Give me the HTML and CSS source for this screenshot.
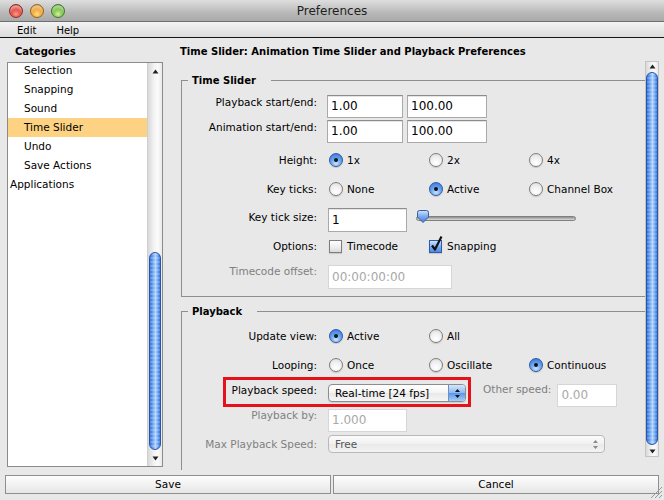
FILE: index.html
```html
<!DOCTYPE html>
<html>
<head>
<meta charset="utf-8">
<title>Preferences</title>
<link rel="stylesheet" href="styles.css">
</head>
<body>
<div class="window">
  <div class="titlebar">
    <div class="lights"><span class="light red"></span><span class="light amber"></span><span class="light green"></span></div>
    <div class="title">Preferences</div>
    <div></div>
  </div>
  <div class="menubar"><span>Edit</span><span>Help</span></div>

  <div class="main">
    <div class="left">
      <div class="cat-title">Categories</div>
      <div class="listbox">
        <div class="list">
          <div class="item first">Selection</div>
          <div class="item">Snapping</div>
          <div class="item">Sound</div>
          <div class="item sel">Time Slider</div>
          <div class="item">Undo</div>
          <div class="item">Save Actions</div>
          <div class="item top">Applications</div>
        </div>
        <div class="vscroll lscroll">
          <div class="arrow up"><svg width="7" height="5" viewBox="0 0 7 5"><path d="M3.5 0.5 L6.5 4.5 L0.5 4.5Z" fill="#222"/></svg></div>
          <div class="track"><div class="thumb"></div></div>
          <div class="arrow down"><svg width="7" height="5" viewBox="0 0 7 5"><path d="M0.5 0.5 L6.5 0.5 L3.5 4.5Z" fill="#222"/></svg></div>
        </div>
      </div>
    </div>

    <div class="right">
      <div class="heading">Time Slider: Animation Time Slider and Playback Preferences</div>
      <div class="content">
        <div class="viewport">
          <fieldset class="group g1">
            <legend>Time Slider</legend>
            <div class="row r1">
              <div class="lbl">Playback start/end:</div>
              <div class="span"><div class="tf w76">1.00</div><div class="tf w80">100.00</div></div>
            </div>
            <div class="row r2">
              <div class="lbl">Animation start/end:</div>
              <div class="span"><div class="tf w76">1.00</div><div class="tf w80">100.00</div></div>
            </div>
            <div class="row r3">
              <div class="lbl">Height:</div>
              <div class="opt"><span class="radio on"></span>1x</div>
              <div class="opt"><span class="radio"></span>2x</div>
              <div class="opt"><span class="radio"></span>4x</div>
            </div>
            <div class="row r4">
              <div class="lbl">Key ticks:</div>
              <div class="opt"><span class="radio"></span>None</div>
              <div class="opt"><span class="radio on"></span>Active</div>
              <div class="opt"><span class="radio"></span>Channel Box</div>
            </div>
            <div class="row r5">
              <div class="lbl">Key tick size:</div>
              <div class="span">
                <div class="tf w79 h24">1</div>
                <div class="slider">
                  <div class="strack"></div>
                  <svg class="sthumb" width="14" height="14" viewBox="0 0 14 14">
                    <defs><linearGradient id="tg" x1="0" y1="0" x2="0" y2="1"><stop offset="0" stop-color="#cfe2fb"/><stop offset="0.5" stop-color="#7aaaf0"/><stop offset="1" stop-color="#3d7fe0"/></linearGradient></defs>
                    <path d="M1.5 2.5 Q1.5 0.5 3.5 0.5 L10.5 0.5 Q12.5 0.5 12.5 2.5 L12.5 7 L7 12.5 L1.5 7 Z" fill="url(#tg)" stroke="#3a5f9e" stroke-width="1"/>
                  </svg>
                </div>
              </div>
            </div>
            <div class="row r6">
              <div class="lbl">Options:</div>
              <div class="opt cb"><span class="check"></span>Timecode</div>
              <div class="opt cb"><span class="check on"><svg width="16" height="17" viewBox="0 0 16 17"><path d="M3 9.5 L6 13.5 L12.5 0.5" fill="none" stroke="#111" stroke-width="2.2" stroke-linejoin="round"/></svg></span>Snapping</div>
            </div>
            <div class="row r7">
              <div class="lbl dis">Timecode offset:</div>
              <div class="span"><div class="tf dis w124 h24">00:00:00:00</div></div>
            </div>
          </fieldset>

          <fieldset class="group g2">
            <legend>Playback</legend>
            <div class="row u1">
              <div class="lbl">Update view:</div>
              <div class="opt"><span class="radio on"></span>Active</div>
              <div class="opt"><span class="radio"></span>All</div>
            </div>
            <div class="row u2">
              <div class="lbl">Looping:</div>
              <div class="opt"><span class="radio"></span>Once</div>
              <div class="opt"><span class="radio"></span>Oscillate</div>
              <div class="opt"><span class="radio on"></span>Continuous</div>
            </div>
            <div class="row u3">
              <div class="lbl">Playback speed:</div>
              <div class="span">
                <div class="combo w138"><span class="ctext">Real-time [24 fps]</span><span class="stepper"><svg width="7" height="11" viewBox="0 0 7 11"><path d="M3.5 1 L6 4 L1 4Z M1 7 L6 7 L3.5 10Z" fill="#111"/></svg></span></div>
                <div class="olbl dis">Other speed:</div>
                <div class="tf dis w60 h23 other">0.00</div>
              </div>
              <div class="redbox"></div>
            </div>
            <div class="row u4">
              <div class="lbl dis">Playback by:</div>
              <div class="span"><div class="tf dis w79 h23">1.000</div></div>
            </div>
            <div class="row u5">
              <div class="lbl dis">Max Playback Speed:</div>
              <div class="span">
                <div class="combo disabled w277"><span class="ctext">Free</span><span class="dstep"><svg width="7" height="11" viewBox="0 0 7 11"><path d="M3.5 1 L6 4 L1 4Z M1 7 L6 7 L3.5 10Z" fill="#8a8a8a"/></svg></span></div>
              </div>
            </div>
          </fieldset>
        </div>
        <div class="vscroll rscroll">
          <div class="arrow up"><svg width="7" height="5" viewBox="0 0 7 5"><path d="M3.5 0.5 L6.5 4.5 L0.5 4.5Z" fill="#222"/></svg></div>
          <div class="track"><div class="thumb"></div></div>
          <div class="arrow down"><svg width="7" height="5" viewBox="0 0 7 5"><path d="M0.5 0.5 L6.5 0.5 L3.5 4.5Z" fill="#222"/></svg></div>
        </div>
      </div>
    </div>
  </div>

  <div class="buttons"><div class="btn save">Save</div><div class="btn cancel">Cancel</div></div>
  <svg class="grip" width="14" height="14" viewBox="0 0 14 14"><path d="M13 2 L2 13 M13 6 L6 13 M13 10 L10 13" stroke="#9a9a9a" stroke-width="1"/></svg>
</div>
</body>
</html>
```

FILE: styles.css
```css
* { box-sizing: border-box; }

body {
  margin: 0;
  background: #e8e8e8;
  font-family: "DejaVu Sans", "Liberation Sans", sans-serif;
  font-size: 10.5px;
  color: #000;
}

.window {
  position: relative;
  width: 664px;
  height: 500px;
  overflow: hidden;
  background: #e8e8e8;
}

/* title bar */
.titlebar {
  height: 22px;
  display: grid;
  grid-template-columns: 1fr auto 1fr;
  align-items: center;
  background: linear-gradient(#dedede, #b9b9b9 60%, #a9a9a9);
  border-bottom: 1px solid #6f6f6f;
}
.lights { display: flex; gap: 7px; padding-left: 9px; }
.light {
  width: 14px;
  height: 14px;
  border-radius: 50%;
  box-shadow: inset 0 3px 3px rgba(255,255,255,0.55);
}
.red { background: radial-gradient(circle at 50% 75%, #ff9d8c 0%, #e2453a 45%, #a9231a 100%); border: 1px solid #8b2a22; }
.amber { background: radial-gradient(circle at 50% 75%, #ffe08a 0%, #f0a12a 45%, #b8660e 100%); border: 1px solid #9a6417; }
.green { background: radial-gradient(circle at 50% 75%, #d5f59c 0%, #74c043 45%, #3d8a1d 100%); border: 1px solid #3f7a24; }
.title { font-size: 12px; color: #1e1e1e; padding-top: 1px; }

.menubar {
  height: 16px;
  display: flex;
  align-items: center;
  gap: 20px;
  padding: 1px 0 0 17px;
  font-size: 10px;
  background: linear-gradient(#f3f3f3, #dcdcdc);
  border-bottom: 1px solid #141414;
}

/* main area */
.main { display: flex; height: 432px; }

.left { width: 156px; margin-left: 7px; display: flex; flex-direction: column; }
.cat-title { height: 24px; padding: 7px 0 0 8px; font-weight: bold; font-size: 10px; line-height: 13px; }
.listbox {
  height: 405px;
  border: 1px solid #8b8b8b;
  background: #fff;
  display: flex;
}
.list { flex: 1; overflow: hidden; }
.item { height: 19px; line-height: 19px; padding-left: 16px; white-space: nowrap; }
.item.first { margin-top: -2px; }
.item.sel { background: #fdd383; }
.item.top { padding-left: 2px; }

/* scrollbars */
.vscroll {
  display: flex;
  flex-direction: column;
  background: linear-gradient(to right, #d9d9d9, #f4f4f4 45%, #fbfbfb 70%, #e9e9e9);
}
.lscroll { width: 15px; border-left: 1px solid #cfcfcf; }
.arrow { display: flex; justify-content: center; }
.lscroll .arrow.up { height: 14px; padding-top: 6px; }
.lscroll .arrow.down { height: 14px; padding-top: 4px; }
.track { flex: 1; display: flex; flex-direction: column; justify-content: flex-end; padding: 0 1px; }
.lscroll .thumb { height: 198px; margin-bottom: 2px; }
.thumb {
  width: 12px;
  margin: 0 auto;
  border-radius: 6px;
  border: 1px solid #2a55a8;
  background:
    repeating-linear-gradient(to bottom, rgba(255,255,255,0.18) 0 2px, rgba(255,255,255,0) 2px 4px),
    linear-gradient(to right, #3270da, #6ea6f2 30%, #b3d3fb 55%, #76adf3 75%, #3572dc);
}

.right { width: 479px; margin-left: 17px; display: flex; flex-direction: column; }
.heading { height: 24px; padding-top: 7px; font-weight: bold; font-size: 10px; line-height: 13px; white-space: nowrap; }
.content { flex: 1; display: flex; align-items: flex-start; }
.viewport { flex: 1; height: 408px; overflow: hidden; padding: 11px 0 0 1px; }

.rscroll { width: 14px; height: 396px; margin-top: -1px; border: 1px solid #c4c4c4; }
.rscroll .arrow.up { height: 10px; padding-top: 2px; }
.rscroll .arrow.down { height: 10px; padding-top: 3px; }
.rscroll .track { justify-content: flex-start; padding: 0; }
.rscroll .thumb { height: 373px; margin-top: 0; }

/* groups */
.group {
  margin: 0;
  padding: 0 0 7px 0;
  min-width: 0;
  border: 1px solid #8e8e8e;
  border-right: none;
}
.group legend {
  margin-left: 6px;
  padding: 1px 15px 0 4px;
  font-weight: bold;
  font-size: 10px;
  line-height: 13px;
}
.g2 { margin-top: 7px; padding-bottom: 60px; }

.row {
  display: grid;
  grid-template-columns: 146px 100px 100px 1fr;
  align-items: center;
  position: relative;
}
.lbl { text-align: right; padding-right: 11px; white-space: nowrap; line-height: 13px; }
.dis { color: #808080; }
.span { grid-column: 2 / -1; display: flex; align-items: flex-start; }

.r1 { margin-top: 8px; height: 23px; align-items: start; }
.r1 .lbl, .r2 .lbl { padding-top: 1px; }
.r1 .span, .r2 .span { gap: 4px; margin-left: -1px; }
.r2 { margin-top: 2px; height: 23px; align-items: start; }
.r3 { margin-top: 8px; height: 18px; }
.r4 { margin-top: 11px; height: 18px; }
.r5 { margin-top: 10px; height: 24px; align-items: start; }
.r5 .lbl { padding-top: 3px; }
.r6 { margin-top: 5px; height: 18px; }
.r7 { margin-top: 10px; height: 24px; align-items: start; }
.r7 .lbl { padding-top: 0; }

.u1 { margin-top: 9px; height: 18px; }
.u2 { margin-top: 11px; height: 18px; }
.u3 { margin-top: 3px; height: 29px; align-items: start; }
.u3 .lbl { padding-top: 7px; }
.u4 { margin-top: 3px; height: 23px; align-items: start; }
.u4 .lbl { padding-top: 0; }
.u5 { margin-top: 3px; height: 18px; align-items: start; }
.u5 .lbl { padding-top: 3px; }

/* text fields */
.tf {
  height: 23px;
  background: #fff;
  border: 1px solid #a9a9a9;
  border-top-color: #8c8c8c;
  font-size: 12px;
  line-height: 21px;
  padding-left: 3px;
  white-space: nowrap;
  box-shadow: inset 0 1px 0 #e4e4e4;
}
.tf.dis { color: #a8a8a8; border-color: #d6d6d6; box-shadow: none; }
.h24 { height: 24px; line-height: 22px; }
.h23 { height: 23px; }
.w76 { width: 76px; }
.w79 { width: 79px; }
.w80 { width: 80px; }
.w60 { width: 60px; }
.w124 { width: 124px; }

/* radios & checks */
.opt { display: flex; align-items: center; gap: 4px; padding-left: 1px; white-space: nowrap; }
.opt.cb { gap: 5px; }
.radio {
  width: 14px;
  height: 14px;
  border-radius: 50%;
  border: 1px solid #7d7d7d;
  background: radial-gradient(circle at 50% 75%, #ffffff 0%, #f1f1f1 50%, #d6d6d6 100%);
  box-shadow: 0 1px 1px rgba(0,0,0,0.15);
  display: flex;
  align-items: center;
  justify-content: center;
  flex: none;
}
.radio.on {
  border-color: #2f5aa8;
  background: radial-gradient(circle at 50% 80%, #c9e3ff 0%, #6ba5ee 45%, #2f6fd3 100%);
}
.radio.on::after {
  content: "";
  width: 4px;
  height: 4px;
  border-radius: 50%;
  background: #111;
}
.check {
  position: relative;
  width: 13px;
  height: 13px;
  flex: none;
  border: 1px solid #7d7d7d;
  background: linear-gradient(#ffffff, #ececec 60%, #dadada);
  box-shadow: 0 1px 1px rgba(0,0,0,0.12);
}
.check.on {
  border-color: #2f5aa8;
  background: linear-gradient(#cfe3fb, #78aaee 55%, #4b8be4);
}
.check.on svg { position: absolute; left: -1px; top: -5px; }

/* slider */
.slider { position: relative; margin-left: 9px; margin-top: 4px; width: 160px; height: 16px; }
.strack {
  margin-top: 4px;
  height: 5px;
  border-radius: 3px;
  background: linear-gradient(#8c8c8c, #bdbdbd 60%, #d8d8d8);
  border: 1px solid #7f7f7f;
}
.sthumb { position: absolute; left: 0; top: -2px; }

/* combos */
.combo {
  display: flex;
  height: 18px;
  margin-top: 7px;
  border: 1px solid #8d8d8d;
  border-radius: 4px;
  overflow: hidden;
  background: linear-gradient(#ffffff, #f4f4f4 50%, #e8e8e8 51%, #f6f6f6);
  box-shadow: 0 1px 1px rgba(0,0,0,0.12);
}
.w138 { width: 138px; }
.w277 { width: 277px; margin-top: 0; }
.ctext { flex: 1; padding-left: 6px; line-height: 16px; white-space: nowrap; }
.stepper {
  width: 17px;
  display: flex;
  align-items: center;
  justify-content: center;
  border-left: 1px solid #6e8fc4;
  background: linear-gradient(#d6e7fb, #8dbaf3 48%, #5a97ea 52%, #a8cdf7);
}
.combo.disabled { border-color: #b9b9b9; color: #555; box-shadow: none; background: linear-gradient(#fbfbfb, #f1f1f1 50%, #e9e9e9 51%, #f3f3f3); }
.dstep { width: 17px; display: flex; align-items: center; justify-content: center; }

.olbl { margin-left: 17px; padding-top: 6px; line-height: 13px; white-space: nowrap; }
.tf.other { margin-left: 6px; margin-top: 7px; }

.redbox {
  position: absolute;
  left: 41px;
  top: 0;
  width: 248px;
  height: 30px;
  border: 3px solid #e5121b;
  pointer-events: none;
}

/* buttons */
.buttons { display: flex; gap: 2px; padding: 5px 5px 0 5px; }
.btn {
  height: 19px;
  border: 1px solid #8f8f8f;
  background: linear-gradient(#fdfdfd, #f2f2f2 50%, #e6e6e6);
  text-align: center;
  line-height: 17px;
}
.save { width: 326px; }
.cancel { flex: 1; }

.grip { position: absolute; right: 1px; bottom: 1px; }
```
